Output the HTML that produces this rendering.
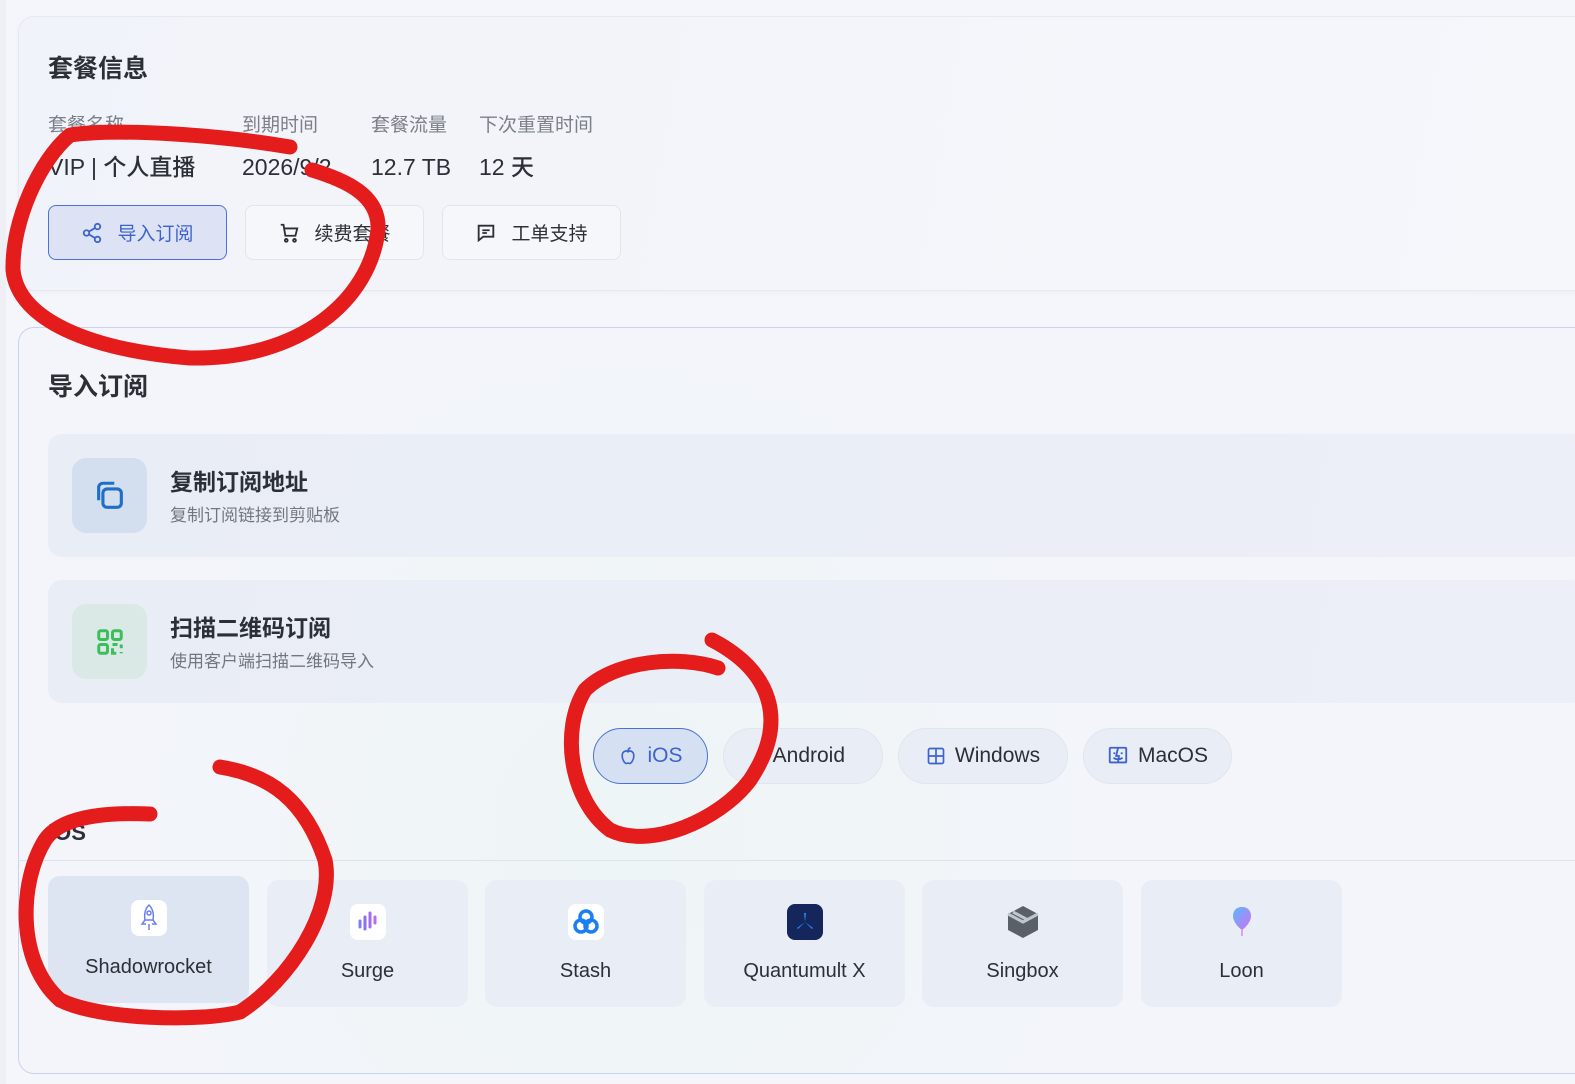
<!DOCTYPE html>
<html><head><meta charset="utf-8"><style>
*{box-sizing:border-box;margin:0;padding:0}
body{width:1575px;height:1084px;overflow:hidden;background:#eef0f5;font-family:"Liberation Sans","Noto Sans CJK SC",sans-serif;color:#2b2f36;position:relative}
.wrap{position:absolute;left:6px;top:0;right:0;bottom:0;background:#f4f6fb}
.card{position:absolute;left:18px;right:-20px;background:linear-gradient(100deg,#f1f3fa,#f5f7fb);border-radius:16px;border:1px solid #e6e9f1}
h2{position:absolute;font-size:25px;font-weight:700;color:#2b2f36;line-height:30px}
.lab{position:absolute;top:112px;font-size:19px;color:#7a7f88;line-height:28px}
.val{position:absolute;top:152px;font-size:23px;font-weight:500;color:#2b2f36;line-height:30px;height:30px}
.btn{position:absolute;top:205px;width:179px;height:55px;border:1px solid #e2e5ec;border-radius:8px;display:flex;align-items:center;justify-content:center;gap:14px;font-size:19px;color:#2b2f36;background:#f5f7fb}
.row{position:absolute;left:48px;right:-10px;height:123px;border-radius:14px;background:linear-gradient(100deg,#e9edf6,#eceff7)}
.ic{position:absolute;left:24px;top:24px;width:75px;height:75px;border-radius:14px;display:flex;align-items:center;justify-content:center}
.rt{position:absolute;left:122px;top:32px;font-size:23px;font-weight:700;line-height:32px}
.rs{position:absolute;left:122px;top:70px;font-size:17px;color:#72777f;line-height:24px}
.pill{position:absolute;top:728px;height:56px;border-radius:28px;background:#e9edf5;border:1px solid #e1e5ee;display:flex;align-items:center;justify-content:center;gap:9px;font-size:21px;color:#2b2f36}
.app{position:absolute;top:880px;width:201px;height:127px;border-radius:12px;background:#e9edf6;text-align:center;font-size:20px;color:#2b2f36}
.app .lg{width:36px;height:36px;margin:24px auto 20px;border-radius:8px;display:flex;align-items:center;justify-content:center}
</style></head><body>
<div class="wrap">
<div class="card" style="top:16px;height:275px;left:12px;box-shadow:0 2px 6px rgba(0,0,0,0.03)">
</div>
<h2 style="left:42px;top:54px">套餐信息</h2>
<div class="lab" style="left:42px">套餐名称</div>
<div class="lab" style="left:236px">到期时间</div>
<div class="lab" style="left:365px">套餐流量</div>
<div class="lab" style="left:473px">下次重置时间</div>
<div class="val" style="left:42px">VIP | 个人直播</div>
<div class="val" style="left:236px">2026/9/2</div>
<div class="val" style="left:365px">12.7 TB</div>
<div class="val" style="left:473px">12 天</div>
<div class="btn" style="left:42px;background:#dde3f5;border-color:#4a72d6;color:#3d63cc"><svg width="22" height="22" viewBox="0 0 24 24" fill="none" stroke="#3d63cc" stroke-width="2"><circle cx="18" cy="5" r="3"/><circle cx="6" cy="12" r="3"/><circle cx="18" cy="19" r="3"/><path d="M8.6 13.5l6.8 4M15.4 6.5l-6.8 4"/></svg>导入订阅</div>
<div class="btn" style="left:239px"><svg width="22" height="22" viewBox="0 0 24 24" fill="none" stroke="#2b2f36" stroke-width="2"><path d="M3 3h3l2 12h11l2-8H7"/><circle cx="9" cy="20" r="1.5"/><circle cx="18" cy="20" r="1.5"/></svg>续费套餐</div>
<div class="btn" style="left:436px"><svg width="22" height="22" viewBox="0 0 24 24" fill="none" stroke="#2b2f36" stroke-width="2"><path d="M4 4h16v12H9l-5 4z"/><path d="M8 9h8M8 12h5"/></svg>工单支持</div>

<div class="card" style="top:327px;height:747px;left:12px;border-color:#c9d3ee;background:radial-gradient(circle at 600px 500px,#eef5f6 0,#f3f5fa 500px)"></div>
<h2 style="left:42px;top:372px">导入订阅</h2>
<div class="row" style="top:434px;left:42px"><div class="ic" style="background:#d3deef"><svg width="34" height="34" viewBox="0 0 24 24" fill="none" stroke="#1f6fc7" stroke-width="2.2"><rect x="7" y="7" width="13" height="13" rx="3"/><path d="M4 15V6a3 3 0 0 1 3-3h8"/></svg></div><div class="rt">复制订阅地址</div><div class="rs">复制订阅链接到剪贴板</div></div>
<div class="row" style="top:580px;left:42px"><div class="ic" style="background:#dbe9e6"><svg width="30" height="30" viewBox="0 0 24 24" fill="none" stroke="#3cbf5a" stroke-width="2.4"><rect x="3" y="3" width="7" height="7" rx="1.5"/><rect x="14" y="3" width="7" height="7" rx="1.5"/><rect x="3" y="14" width="7" height="7" rx="1.5"/><path d="M14 14h4M21 14v3M14 17v4h3M21 20v1"/></svg></div><div class="rt">扫描二维码订阅</div><div class="rs">使用客户端扫描二维码导入</div></div>

<div class="pill" style="left:587px;width:115px;background:#d6e0f3;border-color:#4a72d6;color:#3d63cc"><svg width="20" height="22" viewBox="0 0 24 24" fill="none" stroke="#3d63cc" stroke-width="2"><path d="M12 7c-2-2-7-1-7 5 0 4 3 9 5 9 1 0 1.5-.6 2-.6s1 .6 2 .6c2 0 5-5 5-9 0-6-5-7-7-5zM12 6c0-2 1-3 3-4"/></svg>iOS</div>
<div class="pill" style="left:717px;width:160px">&nbsp;&nbsp;Android</div>
<div class="pill" style="left:892px;width:170px"><svg width="20" height="20" viewBox="0 0 24 24" fill="none" stroke="#3d63cc" stroke-width="2"><rect x="3" y="3" width="18" height="18" rx="2"/><path d="M12 3v18M3 12h18"/></svg>Windows</div>
<div class="pill" style="left:1077px;width:149px"><svg width="22" height="22" viewBox="0 0 24 24" fill="none" stroke="#3d63cc" stroke-width="2"><rect x="3" y="3" width="18" height="16" rx="1"/><path d="M12 3l-2 9h3l-1 7M8 8v2M16 8v2M7 14c3 2 7 2 10 0"/></svg>MacOS</div>

<div style="position:absolute;left:42px;top:820px;font-size:22px;font-weight:700">iOS</div>
<div style="position:absolute;left:12px;right:0;top:860px;height:1px;background:#dce2ee"></div>

<div class="app" style="left:42px;top:876px;background:#dde5f3"><div class="lg" style="background:#fff"><svg width="22" height="30" viewBox="0 0 22 30" fill="none" stroke="#6c7ff0" stroke-width="1.5"><path d="M11 2c4 4 5 9 4 15H7C6 11 7 6 11 2z"/><circle cx="11" cy="10" r="2"/><path d="M7 17l-3 4h4M15 17l3 4h-4M11 21v6"/></svg></div>Shadowrocket</div>
<div class="app" style="left:261px"><div class="lg" style="background:#fff"><svg width="26" height="26" viewBox="0 0 26 26" stroke-width="3" stroke-linecap="round"><path d="M5 12v6" stroke="#7b7ff0"/><path d="M10 8v12" stroke="#8a6ff0"/><path d="M15 4v14" stroke="#a06cf0"/><path d="M20 8v6" stroke="#c06ae8"/></svg></div>Surge</div>
<div class="app" style="left:479px"><div class="lg" style="background:#fff"><svg width="32" height="32" viewBox="0 0 32 32" fill="none" stroke="#1a7ff0" stroke-width="3.5"><circle cx="16" cy="11" r="6"/><circle cx="11" cy="20" r="6"/><circle cx="21" cy="20" r="6"/></svg></div>Stash</div>
<div class="app" style="left:698px"><div class="lg" style="background:#14265c"><svg width="24" height="24" viewBox="0 0 24 24" fill="#2a8cf0"><path d="M11 3h2l-1 9zM12 12l-8 6 1 1zM12 12l8 6-1 1z"/></svg></div>Quantumult X</div>
<div class="app" style="left:916px"><div class="lg"><svg width="36" height="36" viewBox="0 0 36 36"><path d="M18 2l15 8v16l-15 8-15-8V10z" fill="#5a6068"/><path d="M3 10l15 8 15-8" fill="none" stroke="#c0c6ce" stroke-width="3"/><path d="M8 8l15 8" stroke="#c0c6ce" stroke-width="3"/></svg></div>Singbox</div>
<div class="app" style="left:1135px"><div class="lg"><svg width="24" height="34" viewBox="0 0 24 34"><defs><linearGradient id="g" x1="0" y1="0" x2="1" y2="1"><stop offset="0" stop-color="#5ab8ff"/><stop offset="1" stop-color="#d070f0"/></linearGradient></defs><path d="M12 2c6 0 9 4 9 9 0 6-6 12-9 14-3-2-9-8-9-14 0-5 3-9 9-9z" fill="url(#g)"/><path d="M12 25v6" stroke="#e4a0f0" stroke-width="2"/></svg></div>Loon</div>
</div>

<svg width="1575" height="1084" style="position:absolute;left:0;top:0" fill="none" stroke="#e41c1c" stroke-width="15" stroke-linecap="round" stroke-linejoin="round">
<path d="M290 147C220 135 120 128 70 135 40 160 12 220 13 270 18 320 90 350 190 358 300 360 370 300 378 230 380 195 345 180 312 170"/>
<path d="M718 668C680 655 615 660 585 690 560 730 570 800 610 830 650 850 720 820 750 780 790 720 770 670 712 640"/>
<path d="M150 814C100 812 60 818 45 840 20 880 15 960 60 1000 100 1020 200 1022 240 1012 290 980 335 910 325 860 305 800 270 775 220 767"/>
</svg>
</body></html>
